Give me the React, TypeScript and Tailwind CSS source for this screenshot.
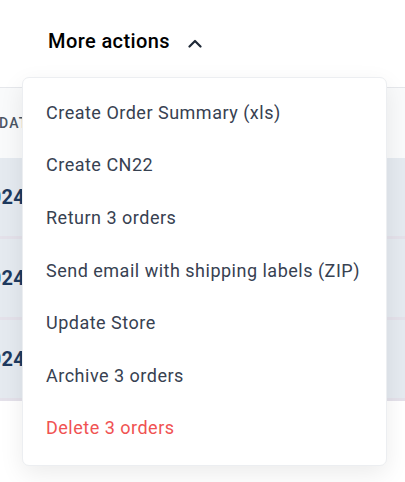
import React from "react";

const items = [
  "Create Order Summary (xls)",
  "Create CN22",
  "Return 3 orders",
  "Send email with shipping labels (ZIP)",
  "Update Store",
  "Archive 3 orders",
];

export default function App() {
  return (
    <div className="relative w-[405px] h-[482px] overflow-hidden bg-white" style={{ fontFamily: "Roboto, 'Noto Sans', sans-serif" }}>
      <div className="h-[87px] flex items-start pt-[27px] pl-[48px]">
        <button className="flex items-center gap-[18px] text-[20px] font-medium tracking-[0.4px] text-black leading-[28px]">
          More actions
          <svg width="14" height="9" viewBox="0 0 14 9" fill="none" className="mt-[4px]">
            <path d="M1.5 7.5L7 2L12.5 7.5" stroke="#1f2937" strokeWidth="2.2" strokeLinecap="round" strokeLinejoin="round" />
          </svg>
        </button>
      </div>
      <div className="border-t border-[#e5e7eb]">
        <div className="h-[70px] bg-[#f9fafb] flex items-center text-[14px] font-medium tracking-[1.2px] text-[#4b5563]">
          <span className="-ml-[1px]">DATE</span>
        </div>
        {[0, 1, 2].map((i) => (
          <div key={i} className="h-[81px] bg-[#e5eaf0] border-b-[3px] border-[#e4e1ea] flex items-center">
            <span className="text-[20px] font-bold text-[#1e3a5f] -ml-[22px] tracking-[0.3px]">2024</span>
          </div>
        ))}
      </div>
      <div className="absolute left-[22px] top-[77px] w-[365px] bg-white rounded-[7px] border border-[#eceef1] shadow-[0_8px_24px_rgba(0,0,0,0.08)] pt-[8px] pb-[11px]">
        {items.map((t) => (
          <div key={t} className="h-[52.6px] flex items-center pl-[23px] text-[18px] tracking-[0.5px] text-[#374151]">
            {t}
          </div>
        ))}
        <div className="h-[52.6px] flex items-center pl-[23px] text-[18px] tracking-[0.5px] text-[#f05252]">
          Delete 3 orders
        </div>
      </div>
    </div>
  );
}
